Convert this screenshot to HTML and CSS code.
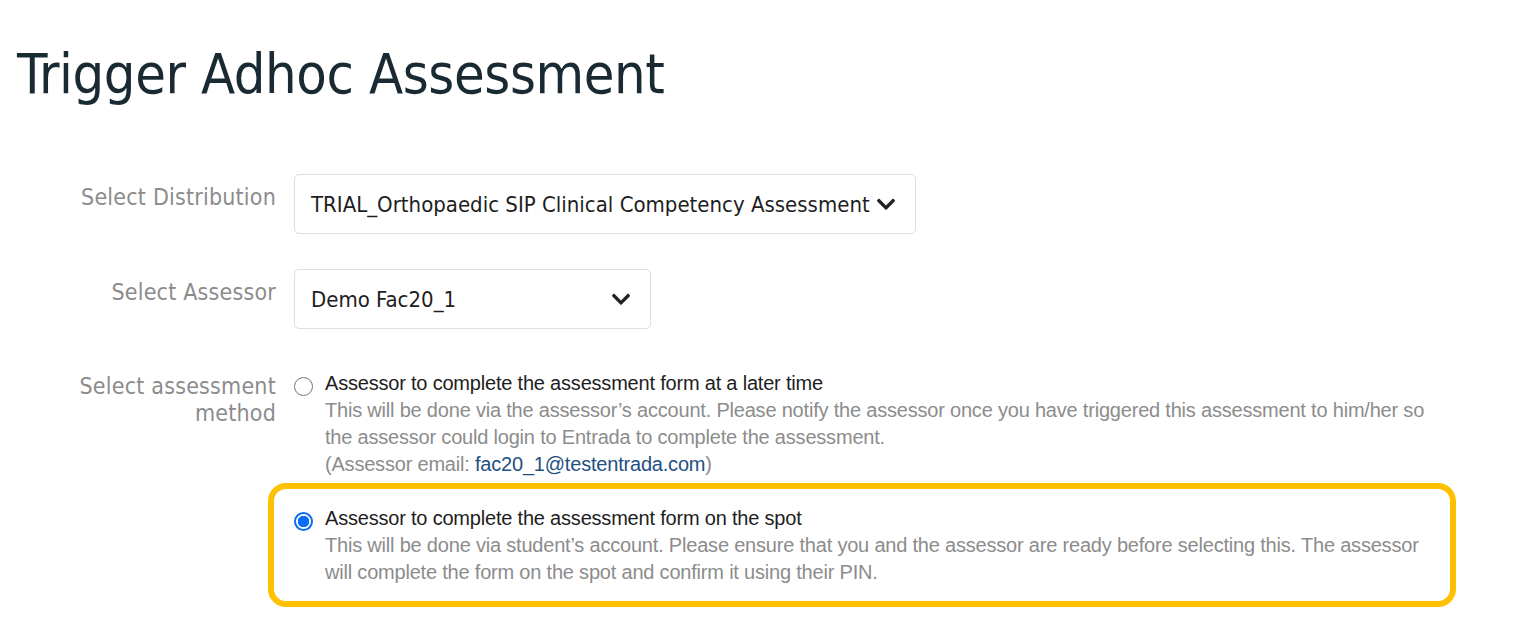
FILE: index.html
```html
<!DOCTYPE html>
<html lang="en">
<head>
<meta charset="utf-8">
<title>Trigger Adhoc Assessment</title>
<link rel="stylesheet" href="styles.css">
</head>
<body>
<main class="page">
  <h1 class="title">Trigger Adhoc Assessment</h1>
  <form class="form">
    <div class="row row-select">
      <label class="label">Select Distribution</label>
      <div class="select select-wide">
        <span class="select-text">TRIAL_Orthopaedic SIP Clinical Competency Assessment</span>
        <svg class="chev" viewBox="0 0 448 300" width="18" height="12"><path d="M207 285 L7 85 c-9-9-9-25 0-34 l24-24 c9-9 25-9 34 0 L224 186 383 27 c9-9 25-9 34 0 l24 24 c9 9 9 25 0 34 L241 285 c-9 9-25 9-34 0z" fill="#222"/></svg>
      </div>
    </div>
    <div class="row row-select">
      <label class="label">Select Assessor</label>
      <div class="select select-narrow">
        <span class="select-text">Demo Fac20_1</span>
        <svg class="chev" viewBox="0 0 448 300" width="18" height="12"><path d="M207 285 L7 85 c-9-9-9-25 0-34 l24-24 c9-9 25-9 34 0 L224 186 383 27 c9-9 25-9 34 0 l24 24 c9 9 9 25 0 34 L241 285 c-9 9-25 9-34 0z" fill="#222"/></svg>
      </div>
    </div>
    <div class="row row-method">
      <label class="label label-method">Select assessment<br>method</label>
      <div class="options">
        <div class="option">
          <span class="radio"></span>
          <div class="option-body">
            <div class="option-title">Assessor to complete the assessment form at a later time</div>
            <div class="option-desc">This will be done via the assessor’s account. Please notify the assessor once you have triggered this assessment to him/her so the assessor could login to Entrada to complete the assessment.<br>(Assessor email: <a class="email">fac20_1@testentrada.com</a>)</div>
          </div>
        </div>
        <div class="option option-highlight">
          <span class="radio radio-checked"></span>
          <div class="option-body">
            <div class="option-title">Assessor to complete the assessment form on the spot</div>
            <div class="option-desc">This will be done via student’s account. Please ensure that you and the assessor are ready before selecting this. The assessor will complete the form on the spot and confirm it using their PIN.</div>
          </div>
        </div>
      </div>
    </div>
  </form>
</main>
</body>
</html>
```

FILE: styles.css
```css
html, body {
  margin: 0;
  padding: 0;
  background: #ffffff;
}

.page {
  padding: 40px 0 0 17px;
}

.title {
  margin: 0;
  font-family: "DejaVu Sans Condensed", "DejaVu Sans", sans-serif;
  font-weight: normal;
  font-size: 55.5px;
  line-height: 68px;
  color: #1a2a33;
  letter-spacing: -0.4px;
}

.form {
  margin-top: 66px;
  display: flex;
  flex-direction: column;
  gap: 35px;
}

.row {
  display: grid;
  grid-template-columns: 259px 1fr;
  column-gap: 18px;
  align-items: start;
}

.row-method {
  margin-top: 6px;
}

.label {
  font-family: "DejaVu Sans Condensed", "DejaVu Sans", sans-serif;
  font-size: 23px;
  line-height: 27px;
  color: #8c8c8c;
  text-align: right;
  letter-spacing: 0.2px;
  padding-top: 10px;
}

.label-method {
  padding-top: 3px;
}

.select {
  box-sizing: border-box;
  height: 60px;
  border: 1px solid #dcdfe3;
  border-radius: 5px;
  display: flex;
  align-items: center;
  justify-content: space-between;
  padding: 0 20px 0 16px;
}

.select-wide { width: 622px; }
.select-narrow { width: 357px; }

.select-text {
  font-family: "DejaVu Sans Condensed", "DejaVu Sans", sans-serif;
  font-size: 22px;
  color: #1e1e1e;
}

.chev { display: block; flex: none; }

.options {
  display: flex;
  flex-direction: column;
  gap: 5px;
  font-family: "Liberation Sans", Arial, sans-serif;
}

.option {
  display: flex;
  gap: 12px;
  align-items: flex-start;
}

.option-body {
  max-width: 1105px;
}

.option-highlight {
  margin-left: -26px;
  width: 1188px;
  box-sizing: border-box;
  border: 6px solid #ffc000;
  border-radius: 18px;
  padding: 16px 20px 15px 20px;
}

.radio {
  flex: none;
  box-sizing: border-box;
  width: 19px;
  height: 19px;
  margin-top: 7px;
  border: 1.5px solid #767676;
  border-radius: 50%;
  background: #fff;
}

.radio-checked {
  border: 2px solid #0b6cf5;
  background: radial-gradient(circle, #0b6cf5 0 5.5px, #fff 6px);
}

.option-title {
  font-size: 20px;
  line-height: 27px;
  color: #1e1e1e;
  letter-spacing: -0.2px;
}

.option-desc {
  font-size: 20px;
  line-height: 27px;
  color: #8c8c8c;
  letter-spacing: -0.2px;
}

.email {
  color: #1f4f82;
  text-decoration: none;
}
```
